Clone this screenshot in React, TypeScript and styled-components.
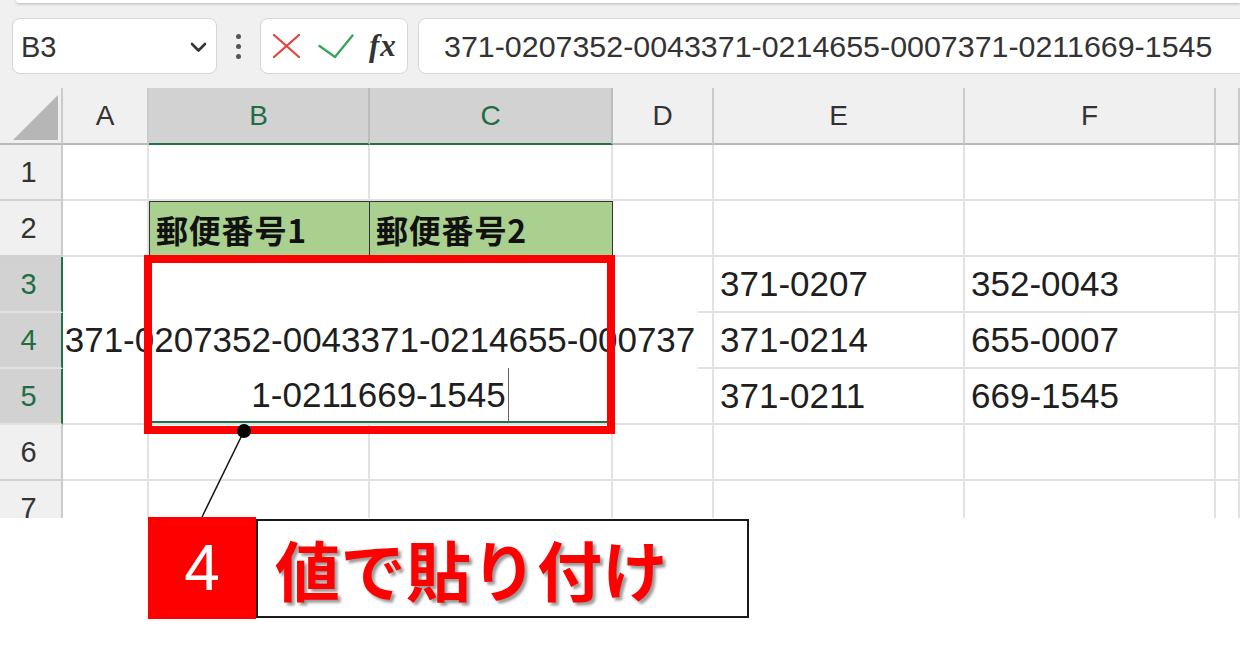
import React from 'react';
import styled, { createGlobalStyle } from 'styled-components';

const GREEN = '#217346';
const GRID = '#e2e2e2';

const GlobalStyle = createGlobalStyle`
  html, body { margin: 0; padding: 0; background: #fff; }
  body { font-family: "Liberation Sans", Arial, sans-serif; }
  * { box-sizing: border-box; }
`;

const Page = styled.div`
  position: relative;
  width: 1240px;
  height: 653px;
  overflow: hidden;
  background: #fff;
`;

const TopArea = styled.div`
  height: 88px;
  background: #f0f0f0;
  display: flex;
  flex-direction: column;
`;

const RibbonEdge = styled.div`
  height: 3px;
  margin-left: 16px;
  background: #fff;
  border-radius: 0 0 0 8px;
  box-shadow: 0 1px 3px rgba(0, 0, 0, 0.25);
`;

const FormulaRow = styled.div`
  display: flex;
  align-items: center;
  height: 56px;
  margin-top: 15px;
  padding-left: 12px;
`;

const NameBox = styled.div`
  width: 205px;
  height: 56px;
  flex: none;
  background: #fff;
  border: 1px solid #d6d6d6;
  border-radius: 8px;
  display: flex;
  align-items: center;
  justify-content: space-between;
  padding: 2px 9px 0 8px;
  font-size: 29px;
  color: #333;
`;

const Dots = styled.div`
  width: 43px;
  flex: none;
  display: flex;
  flex-direction: column;
  align-items: center;
  gap: 5px;
  span {
    width: 5px;
    height: 5px;
    border-radius: 50%;
    background: #555;
  }
`;

const ButtonGroup = styled.div`
  width: 148px;
  height: 56px;
  flex: none;
  background: #fff;
  border: 1px solid #d6d6d6;
  border-radius: 8px;
  display: flex;
  align-items: center;
  padding-left: 11px;
`;

const IconSlot = styled.div<{ $ml: number }>`
  margin-left: ${(p) => p.$ml}px;
  display: flex;
  align-items: center;
`;

const Fx = styled.span`
  margin-left: 15px;
  font-family: "Liberation Serif", "Times New Roman", serif;
  font-style: italic;
  font-weight: 700;
  font-size: 31px;
  color: #333;
  letter-spacing: 1px;
`;

const FormulaInput = styled.div`
  flex: 1;
  height: 56px;
  margin-left: 10px;
  margin-right: -12px;
  background: #fff;
  border: 1px solid #d6d6d6;
  border-radius: 8px;
  display: flex;
  align-items: center;
  padding-left: 25px;
  font-size: 30.4px;
  color: #333;
  white-space: nowrap;
`;

const Sheet = styled.div`
  display: grid;
  grid-template-columns: 63px 86px 221px 243px 101px 251px 251px 1fr;
  grid-template-rows: 57px repeat(7, 56px);
  height: 430px;
  overflow: hidden;
`;

const Corner = styled.div`
  background: #f0f0f0;
  border-right: 2px solid #cbcbcb;
  border-bottom: 2px solid #b9b9b9;
  display: flex;
  align-items: flex-end;
  justify-content: flex-end;
  padding: 0 3px 3px 0;
`;

const CornerTriangle = styled.div`
  width: 45px;
  height: 45px;
  background: #b6b6b6;
  clip-path: polygon(100% 0, 100% 100%, 0 100%);
`;

const ColHeader = styled.div<{ $sel?: boolean }>`
  background: ${(p) => (p.$sel ? '#d2d2d2' : '#f0f0f0')};
  color: ${(p) => (p.$sel ? '#1f6e43' : '#333')};
  border-right: 2px solid ${(p) => (p.$sel ? '#bdbdbd' : '#cbcbcb')};
  border-bottom: 2px solid ${(p) => (p.$sel ? GREEN : '#b9b9b9')};
  display: flex;
  align-items: center;
  justify-content: center;
  font-size: 28px;
`;

const RowHeader = styled.div<{ $sel?: boolean }>`
  background: ${(p) => (p.$sel ? '#d2d2d2' : '#f0f0f0')};
  color: ${(p) => (p.$sel ? '#1f6e43' : '#333')};
  border-right: 2px solid ${(p) => (p.$sel ? GREEN : '#cbcbcb')};
  border-bottom: 2px solid ${(p) => (p.$sel ? '#e2e2e2' : '#d0d0d0')};
  display: flex;
  align-items: center;
  justify-content: center;
  padding-right: 4px;
  font-size: 29px;
`;

const Cell = styled.div`
  background: #fff;
  border-right: 2px solid ${GRID};
  border-bottom: 2px solid ${GRID};
  display: flex;
  align-items: center;
  padding-left: 6px;
  font-size: 35px;
  color: #1e1e1e;
  white-space: nowrap;
  overflow: hidden;
`;

const TitleCell = styled.div<{ $first?: boolean }>`
  background: #a9d08e;
  border-top: 1.5px solid #333;
  border-bottom: 1.5px solid #333;
  border-right: 1.5px solid #333;
  border-left: ${(p) => (p.$first ? '1.5px solid #333' : 'none')};
  display: flex;
  align-items: center;
  padding-left: 6px;
  font-family: "Noto Sans CJK JP", "Liberation Sans", sans-serif;
  font-weight: 700;
  font-size: 32px;
  letter-spacing: 0.8px;
  color: #111;
  white-space: nowrap;
`;

const MergedArea = styled.div`
  grid-column: 2 / 6;
  grid-row: 4 / 7;
  background:
    linear-gradient(${GREEN}, ${GREEN}) left 86px bottom 0 / 466px 2px no-repeat,
    linear-gradient(${GRID}, ${GRID}) right 0 top 54px / 14px 2px no-repeat,
    linear-gradient(${GRID}, ${GRID}) right 0 top 110px / 14px 2px no-repeat,
    #fff;
  border-right: 2px solid ${GRID};
  border-bottom: 2px solid ${GRID};
  display: flex;
  flex-direction: column;
  align-items: center;
  justify-content: flex-end;
  padding: 0 101px 1px 86px;
  font-size: 35px;
  line-height: 55px;
  color: #1e1e1e;
  white-space: nowrap;
`;

const TextLine = styled.div`
  white-space: nowrap;
`;

const Caret = styled.span`
  display: inline-block;
  width: 0;
  height: 54px;
  margin-left: 2px;
  border-left: 1px solid #666;
  vertical-align: bottom;
`;

const Highlight = styled.div`
  position: absolute;
  left: 144px;
  top: 255px;
  width: 471px;
  height: 179px;
  border: 8px solid #ff0000;
  pointer-events: none;
`;

const Annotation = styled.svg`
  position: absolute;
  left: 0;
  top: 0;
  pointer-events: none;
`;

const Callout = styled.div`
  display: flex;
  align-items: center;
  margin-top: -1px;
  margin-left: 148px;
`;

const StepBadge = styled.div`
  width: 108px;
  height: 102px;
  background: #ff0000;
  color: #fff;
  display: flex;
  align-items: center;
  justify-content: center;
  font-size: 64px;
`;

const StepLabel = styled.div`
  width: 493px;
  height: 99px;
  background: #fff;
  border: 2px solid #1a1a1a;
  display: flex;
  align-items: center;
  padding-left: 17px;
  font-family: "Noto Sans CJK JP", "Liberation Sans", sans-serif;
  font-weight: 700;
  font-size: 65px;
  letter-spacing: 0.5px;
  color: #ff0000;
  text-shadow: 3px 3px 3px rgba(0, 0, 0, 0.4);
  white-space: nowrap;
`;

const columns = ['A', 'B', 'C', 'D', 'E', 'F', ''];
const selectedCols = ['B', 'C'];

const sideData: Record<number, [string, string]> = {
  3: ['371-0207', '352-0043'],
  4: ['371-0214', '655-0007'],
  5: ['371-0211', '669-1545'],
};

export default function App() {
  const rows: React.ReactNode[] = [];
  for (let r = 1; r <= 7; r++) {
    const sel = r >= 3 && r <= 5;
    rows.push(
      <RowHeader key={`rh${r}`} $sel={sel}>
        {r}
      </RowHeader>
    );
    if (r === 2) {
      rows.push(<Cell key="a2" />);
      rows.push(
        <TitleCell key="b2" $first>
          郵便番号1
        </TitleCell>
      );
      rows.push(<TitleCell key="c2">郵便番号2</TitleCell>);
      rows.push(<Cell key="d2" />);
    } else if (r === 3) {
      rows.push(
        <MergedArea key="merged">
          <TextLine>371-0207352-0043371-0214655-000737</TextLine>
          <TextLine>
            1-0211669-1545
            <Caret />
          </TextLine>
        </MergedArea>
      );
    } else if (!sel) {
      ['a', 'b', 'c', 'd'].forEach((c) => rows.push(<Cell key={`${c}${r}`} />));
    }
    const side = sideData[r];
    rows.push(<Cell key={`e${r}`}>{side ? side[0] : ''}</Cell>);
    rows.push(<Cell key={`f${r}`}>{side ? side[1] : ''}</Cell>);
    rows.push(<Cell key={`g${r}`} />);
  }

  return (
    <Page>
      <GlobalStyle />
      <TopArea>
        <RibbonEdge />
        <FormulaRow>
          <NameBox>
            <span>B3</span>
            <svg width="17" height="11" viewBox="0 0 17 11">
              <path d="M2 2 L8.5 8.5 L15 2" fill="none" stroke="#333" strokeWidth="2.6" strokeLinecap="round" strokeLinejoin="round" />
            </svg>
          </NameBox>
          <Dots>
            <span />
            <span />
            <span />
          </Dots>
          <ButtonGroup>
            <IconSlot $ml={1}>
              <svg width="27" height="24" viewBox="0 0 27 24">
                <path d="M1 1 L26 23 M26 1 L1 23" stroke="#e4433f" strokeWidth="2.3" strokeLinecap="round" />
              </svg>
            </IconSlot>
            <IconSlot $ml={18}>
              <svg width="36" height="25" viewBox="0 0 36 25">
                <path d="M1.5 12 L17 23 L34.5 1.5" fill="none" stroke="#3ea458" strokeWidth="2.4" strokeLinecap="round" strokeLinejoin="round" />
              </svg>
            </IconSlot>
            <Fx>fx</Fx>
          </ButtonGroup>
          <FormulaInput>371-0207352-0043371-0214655-0007371-0211669-1545</FormulaInput>
        </FormulaRow>
      </TopArea>

      <Sheet>
        <Corner>
          <CornerTriangle />
        </Corner>
        {columns.map((c, i) => (
          <ColHeader key={`ch${i}`} $sel={selectedCols.includes(c)}>
            {c}
          </ColHeader>
        ))}
        {rows}
      </Sheet>

      <Callout>
        <StepBadge>4</StepBadge>
        <StepLabel>値で貼り付け</StepLabel>
      </Callout>

      <Highlight />
      <Annotation width="1240" height="653" viewBox="0 0 1240 653">
        <line x1="244" y1="431" x2="202" y2="517" stroke="#111" strokeWidth="1.5" />
        <circle cx="244" cy="431" r="7" fill="#000" />
      </Annotation>
    </Page>
  );
}
